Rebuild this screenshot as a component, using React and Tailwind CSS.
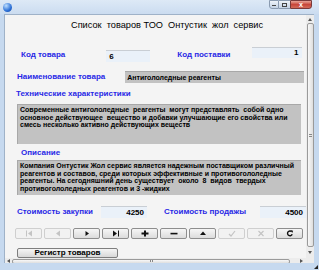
import React from "react";

const Label = ({ children, className = "" }) => (
  <div className={`text-[8px] leading-[10px] font-bold text-[#2828e6] whitespace-nowrap ${className}`}>{children}</div>
);

const Field = ({ value, className = "", right = false }) => (
  <div className={`bg-[#eaf1f9] border-t border-[#c9ced4] text-[8px] leading-[10px] font-bold text-black px-[3px] flex items-center ${right ? "justify-end" : ""} ${className}`}>
    {value}
  </div>
);

const Ico = ({ d, fill = false, dis = false }) => (
  <svg width="8" height="7" viewBox="0 0 8 7">
    {fill ? (
      <path d={d} fill={dis ? "#c4c4c4" : "#111"} />
    ) : (
      <path d={d} fill="none" stroke={dis ? "#c4c4c4" : "#111"} strokeWidth="1.2" />
    )}
  </svg>
);

const NavBtn = ({ children, dis = false }) => (
  <div
    className={`w-[27px] h-[11px] rounded-[2px] border flex items-center justify-center ${
      dis ? "border-[#cfcfcf] bg-[#f2f2f2]" : "border-[#8e8e8e] bg-gradient-to-b from-[#f6f6f6] to-[#dcdcdc]"
    }`}
  >
    {children}
  </div>
);

export default function App() {
  return (
    <div className="w-[319px] h-[270px] overflow-hidden bg-[#c6d9ef] flex flex-col" style={{ fontFamily: '"Liberation Sans", Arial, sans-serif' }}>
      {/* title bar */}
      <div className="h-[14px] flex items-start bg-gradient-to-b from-[#dde9f6] to-[#cbdcf0]">
        <div className="ml-[3px] mt-[3px] w-[9px] h-[9px] rounded-full bg-[radial-gradient(circle_at_35%_30%,#bfe0ff,#2a6fd6_60%,#123f99)]" />
        <div className="ml-auto mr-[7px] flex">
          <div className="w-[10px] h-[9px] border border-[#8a9bb0] rounded-bl-[3px] bg-gradient-to-b from-[#eef3f9] to-[#c3d2e4] flex items-end justify-center pb-[2px]">
            <div className="w-[4px] h-[1px] bg-[#444]" />
          </div>
          <div className="w-[11px] h-[9px] border-y border-[#8a9bb0] bg-gradient-to-b from-[#eef3f9] to-[#c3d2e4] flex items-center justify-center">
            <div className="w-[5px] h-[4px] border border-[#444]" />
          </div>
          <div className="w-[22px] h-[9px] border border-[#7a3a3a] rounded-br-[3px] bg-gradient-to-b from-[#e8a59a] via-[#c8463a] to-[#d26a5a] flex items-center justify-center text-white text-[7px] font-bold leading-none">
            x
          </div>
        </div>
      </div>
      {/* body */}
      <div className="h-[249px] flex">
        <div className="w-[4px] bg-[#c6d9ef]" />
        <div className="w-[302px] flex flex-col border-l border-t border-[#9fb2c8]">
          <div className="h-[243px] bg-[#f4f4f4] flex flex-col">
            <div className="mt-[4px] ml-[66px] h-[13px] text-[9.2px] leading-[13px] text-black whitespace-pre">Список  товаров ТОО  Онтустик  жол  сервис</div>
            {/* row 1 */}
            <div className="mt-[15px] h-[15px] flex items-start">
              <Label className="ml-[16px] mt-[3px]">Код товара</Label>
              <Field value="6" className="ml-[41px] mt-[3px] w-[44px] h-[12px]" />
              <Label className="ml-[27px] mt-[3px]">Код поставки</Label>
              <Field value="1" right className="ml-[21px] w-[50px] h-[11px]" />
            </div>
            {/* row 2 */}
            <div className="mt-[9px] h-[12px] flex items-center">
              <Label className="ml-[12px]">Наименование товара</Label>
              <div className="ml-[20px] w-[179px] h-[12px] bg-[#c2c2c2] border-t border-[#a8a8a8] text-[7px] leading-[11px] font-bold text-black px-[2px]">
                Антигололедные реагенты
              </div>
            </div>
            <Label className="ml-[11px] mt-[6px]">Технические характеристики</Label>
            <div className="ml-[12px] mt-[5px] w-[284px] h-[40px] bg-[#c2c2c2] border-t border-l border-[#a8a8a8] px-[2px] pt-[1px] text-[7px] leading-[7.6px] font-bold text-black">
              Современные антигололедные&nbsp; реагенты&nbsp; могут представлять&nbsp; собой одно основное действующее&nbsp; вещество и добавки улучшающие его свойства или смесь несколько активно действующих веществ
            </div>
            <Label className="ml-[16px] mt-[4px]">Описание</Label>
            <div className="ml-[12px] mt-[2px] w-[284px] h-[35px] bg-[#c2c2c2] border-t border-l border-[#a8a8a8] px-[2px] pt-[1px] text-[7px] leading-[7.6px] font-bold text-black">
              Компания Онтустик Жол сервис является надежным поставщиком различный реагентов и составов, среди которых эффективные и противогололедные реагенты. На сегодняшний день существует&nbsp; около&nbsp; 8&nbsp; видов&nbsp; твердых противогололедных реагентов и 3 -жидких
            </div>
            {/* cost row */}
            <div className="mt-[11px] h-[12px] flex items-center">
              <Label className="ml-[12px]">Стоимость закупки</Label>
              <Field value="4250" right className="ml-[8px] w-[50px] h-[12px]" />
              <Label className="ml-[17px]">Стоимость продажы</Label>
              <Field value="4500" right className="ml-[14px] w-[50px] h-[12px]" />
            </div>
            {/* nav buttons */}
            <div className="mt-[10px] ml-[10px] flex gap-[2px]">
              <NavBtn dis><Ico dis fill d="M1 0.5h1v6h-1z M7 0.5v6l-4-3z" /></NavBtn>
              <NavBtn dis><Ico dis fill d="M6 0.5v6l-4-3z" /></NavBtn>
              <NavBtn><Ico fill d="M2.5 1v5l3.5-2.5z" /></NavBtn>
              <NavBtn><Ico fill d="M1 0.5v6l4-3z M6 0.5h1v6h-1z" /></NavBtn>
              <NavBtn><Ico fill d="M3 0.5h2v2h2.5v2h-2.5v2h-2v-2h-2.5v-2h2.5z" /></NavBtn>
              <NavBtn><Ico fill d="M0.5 2.8h7v1.6h-7z" /></NavBtn>
              <NavBtn><Ico fill d="M4 1.5l3 3.5h-6z" /></NavBtn>
              <NavBtn dis><Ico dis d="M1 4l2 2l4-5" /></NavBtn>
              <NavBtn dis><Ico dis d="M1.5 1l5 5 M6.5 1l-5 5" /></NavBtn>
              <NavBtn>
                <svg width="8" height="7" viewBox="0 0 8 7">
                  <path d="M6.2 4.2a2.4 2.4 0 1 1-0.6-2.6" fill="none" stroke="#111" strokeWidth="1.4" />
                  <path d="M4.6 0.2l2.6 0.6l-1 2.3z" fill="#111" />
                </svg>
              </NavBtn>
            </div>
            {/* register button */}
            <div className="mt-[9px] ml-[12px] w-[101px] h-[10px] rounded-[2px] border border-[#7e7e7e] bg-gradient-to-b from-[#f5f5f5] to-[#d8d8d8] flex items-center justify-center text-[8px] leading-none font-bold text-black">
              Регистр товаров
            </div>
          </div>
          {/* horizontal scrollbar */}
          <div className="h-[6px] bg-[#ececec] flex items-center">
            <div className="w-[7px] h-[6px] flex items-center justify-center">
              <div className="w-0 h-0 border-y-[2px] border-y-transparent border-r-[3px] border-r-[#555]" />
            </div>
            <div className="w-[278px] h-[5px] rounded-[2px] border border-[#9a9a9a] bg-gradient-to-b from-[#f8f8f8] to-[#dedede] flex items-center justify-center">
              <div className="w-[3px] h-[2px] border-x border-[#888]" />
            </div>
            <div className="flex-1 h-[6px] flex items-center justify-end pr-[3px]">
              <div className="w-0 h-0 border-y-[2px] border-y-transparent border-l-[3px] border-l-[#555]" />
            </div>
          </div>
        </div>
        {/* vertical scrollbar */}
        <div className="w-[8px] flex flex-col border-t border-[#9fb2c8]">
          <div className="h-[242px] bg-[#ececec] flex flex-col items-center">
            <div className="h-[8px] flex items-center justify-center">
              <div className="w-0 h-0 border-x-[2px] border-x-transparent border-b-[3px] border-b-[#555]" />
            </div>
            <div className="w-[7px] h-[224px] rounded-[2px] border border-[#9a9a9a] bg-gradient-to-r from-[#f8f8f8] to-[#dedede] flex items-center justify-center">
              <div className="w-[3px] h-[3px] border-y border-[#888]" />
            </div>
            <div className="flex-1 flex items-center justify-center">
              <div className="w-0 h-0 border-x-[2px] border-x-transparent border-t-[3px] border-t-[#555]" />
            </div>
          </div>
          <div className="h-[6px] bg-[#ececec]" />
        </div>
        <div className="flex-1 bg-[#c6d9ef]" />
      </div>
      <div className="flex-1 bg-[#c6d9ef] flex justify-end items-end">
        <div className="mr-[1px] mb-[1px] w-0 h-0 border-l-[4px] border-l-transparent border-b-[4px] border-b-[#222]" />
      </div>
    </div>
  );
}
